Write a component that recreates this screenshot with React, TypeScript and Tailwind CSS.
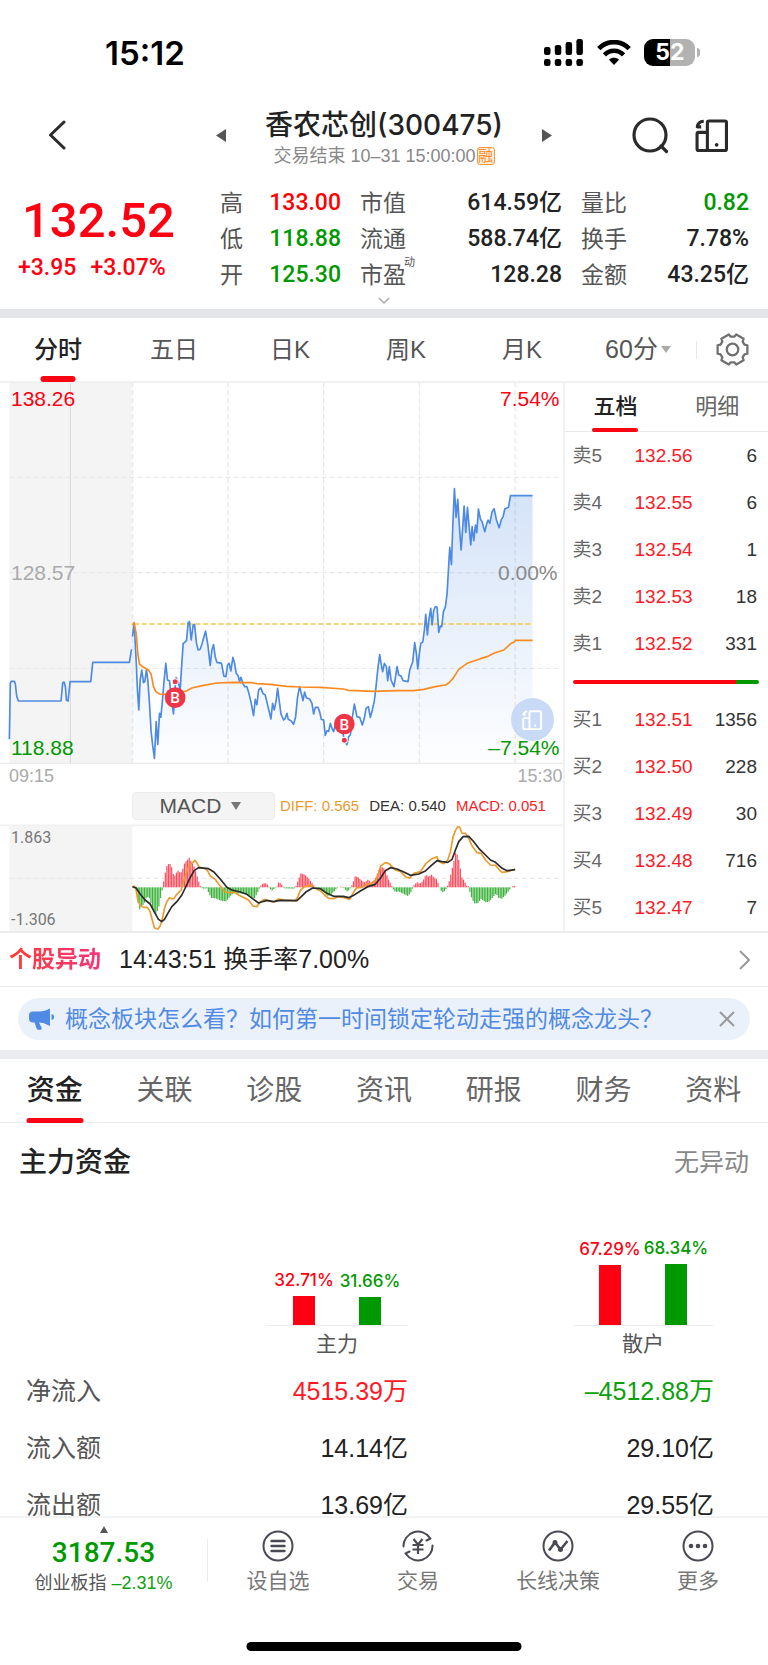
import { useState } from "react";

const klineTabs = ["分时", "五日", "日K", "周K", "月K"];
const infoTabs = ["资金", "关联", "诊股", "资讯", "研报", "财务", "资料"];

const stats = [
  { label: "高", value: "133.00", color: "text-[#fe0000]" },
  { label: "市值", value: "614.59亿", color: "text-[#222]" },
  { label: "量比", value: "0.82", color: "text-[#009900]" },
  { label: "低", value: "118.88", color: "text-[#009900]" },
  { label: "流通", value: "588.74亿", color: "text-[#222]" },
  { label: "换手", value: "7.78%", color: "text-[#222]" },
  { label: "开", value: "125.30", color: "text-[#009900]" },
  { label: "市盈", value: "128.28", color: "text-[#222]", sup: "动" },
  { label: "金额", value: "43.25亿", color: "text-[#222]" },
];

const sells = [
  ["卖5", "132.56", "6"],
  ["卖4", "132.55", "6"],
  ["卖3", "132.54", "1"],
  ["卖2", "132.53", "18"],
  ["卖1", "132.52", "331"],
];
const buys = [
  ["买1", "132.51", "1356"],
  ["买2", "132.50", "228"],
  ["买3", "132.49", "30"],
  ["买4", "132.48", "716"],
  ["买5", "132.47", "7"],
];

const flowRows = [
  { label: "净流入", main: "4515.39万", retail: "–4512.88万", colored: true },
  { label: "流入额", main: "14.14亿", retail: "29.10亿", colored: false },
  { label: "流出额", main: "13.69亿", retail: "29.55亿", colored: false },
];

// chart data, x / y in chart units (3 units per css pixel)
const preLine =
  "28,1288 31,1118 34,1114 43,1114 46,1122 50,1158 55,1173 183,1173 188,1118 192,1116 196,1130 199,1170 204,1173 210,1115 272,1115 278,1057 388,1057 394,1018";
const priceLine =
  "397,980 402,938 408,1050 412,1140 416,1200 420,1110 425,1080 430,1118 434,1115 439,1078 443,1110 448,1180 453,1265 458,1310 463,1345 468,1235 473,1303 478,1210 482,1222 487,1170 492,1110 497,1060 502,1110 508,1112 514,1170 520,1212 525,1130 528,1103 534,1115 540,1140 545,1060 549,1000 555,996 559,992 564,938 568,935 573,990 579,945 583,943 589,1000 594,1020 600,1018 606,1000 616,963 623,1005 630,1066 635,1020 640,1004 645,1040 650,1057 664,1060 671,1098 677,1100 682,1065 687,1060 692,1083 698,1042 703,1060 708,1090 714,1098 718,1115 722,1102 728,1120 733,1130 740,1130 746,1150 752,1175 760,1217 765,1168 770,1184 775,1140 782,1134 788,1150 795,1155 801,1180 812,1227 817,1180 822,1200 828,1170 832,1135 838,1180 842,1212 850,1230 855,1225 860,1210 864,1228 872,1232 880,1243 886,1220 892,1160 898,1130 903,1150 908,1172 913,1146 918,1163 928,1167 935,1180 940,1212 945,1192 953,1192 958,1205 963,1228 970,1230 975,1276 980,1262 985,1264 990,1240 995,1255 1000,1265 1005,1245 1010,1235 1018,1240 1025,1255 1030,1280 1035,1298 1040,1304 1045,1280 1050,1275 1055,1230 1062,1182 1070,1220 1078,1222 1086,1245 1092,1225 1097,1195 1104,1190 1110,1222 1116,1200 1122,1172 1127,1130 1132,1080 1138,1034 1142,1060 1147,1085 1152,1060 1158,1070 1162,1112 1167,1070 1172,1110 1181,1130 1190,1070 1195,1095 1202,1098 1208,1112 1223,1115 1228,1080 1237,1055 1243,998 1248,1030 1252,1077 1257,1030 1261,1000 1267,996 1272,960 1276,913 1281,975 1286,925 1291,895 1295,945 1300,900 1305,890 1310,892 1315,967 1320,948 1324,950 1329,905 1335,890 1340,850 1344,780 1348,712 1353,764 1357,650 1362,536 1367,622 1372,568 1377,650 1382,720 1387,650 1391,588 1396,667 1401,592 1406,650 1411,705 1415,650 1420,692 1425,645 1429,668 1434,597 1440,628 1445,635 1453,665 1459,640 1463,630 1468,640 1475,605 1481,596 1488,630 1496,653 1503,628 1508,620 1513,597 1524,592 1530,557 1596,557";
const avgLine =
  "397,945 402,938 408,970 413,1030 418,1062 430,1072 445,1080 453,1093 460,1130 467,1145 478,1152 495,1153 530,1152 560,1142 575,1134 610,1126 650,1119 700,1117 755,1118 770,1121 810,1123 860,1129 900,1131 960,1132 1030,1137 1045,1141 1120,1144 1190,1142 1240,1142 1270,1138 1305,1130 1335,1125 1345,1119 1358,1105 1375,1078 1400,1060 1440,1046 1460,1040 1480,1030 1510,1020 1532,1000 1540,997 1545,991 1596,991";

const diffLine =
  "397,260 403,258 408,270 413,300 420,315 430,322 442,322 450,335 457,362 463,384 473,387 480,378 487,355 493,325 500,305 508,293 520,297 530,283 543,270 550,245 558,220 566,198 575,190 584,181 591,190 597,202 615,206 622,212 630,228 645,238 660,258 675,276 690,278 702,276 715,285 732,293 745,300 758,318 770,320 780,306 792,298 805,303 820,306 835,297 850,300 885,302 893,290 900,272 912,260 930,256 945,265 960,272 973,285 985,295 1000,296 1015,290 1035,294 1048,298 1058,280 1068,264 1085,262 1100,252 1115,250 1128,238 1135,218 1141,198 1155,188 1166,191 1175,200 1185,210 1200,214 1215,230 1228,235 1240,220 1260,215 1277,190 1292,178 1309,170 1316,185 1330,191 1342,180 1350,155 1358,110 1365,92 1372,80 1378,82 1384,99 1395,100 1405,115 1415,138 1430,158 1442,160 1455,180 1470,195 1485,196 1495,208 1505,217 1525,214 1544,207";
const deaLine =
  "397,260 408,264 420,282 435,300 450,312 462,335 475,358 485,365 493,358 503,340 515,320 530,305 545,285 558,258 570,233 582,212 595,203 625,206 640,215 660,237 680,262 695,270 720,276 740,283 760,298 775,309 790,304 800,301 820,305 840,301 890,302 903,290 918,275 937,264 960,266 980,280 1000,289 1030,289 1045,293 1060,286 1080,273 1105,259 1125,253 1140,235 1155,212 1170,203 1190,207 1215,218 1230,226 1255,222 1275,213 1293,196 1310,182 1325,185 1342,187 1355,178 1365,150 1375,125 1388,110 1405,109 1418,123 1435,145 1455,165 1470,180 1485,187 1505,205 1520,212 1544,209";

const macdKnots: number[][] = [
  [397, 0], [404, 0], [407, -10], [412, -45], [415, -68], [418, -65], [425, -55], [430, -50],
  [438, -28], [445, -30], [455, -60], [463, -82], [468, -75], [474, -60], [480, -28], [486, 0],
  [490, 25], [497, 62], [505, 72], [511, 68], [515, 50], [520, 30], [525, 42], [532, 50],
  [540, 42], [546, 55], [552, 75], [558, 80], [566, 90], [572, 75], [580, 62], [587, 40],
  [593, 20], [600, 0], [606, -4], [618, -3], [625, -20], [632, -32], [645, -33], [660, -40],
  [675, -42], [682, -35], [692, -22], [700, -18], [720, -18], [740, -22], [750, -27], [760, -35],
  [768, -20], [775, -5], [780, 5], [787, 12], [797, 12], [803, 4], [808, -4], [813, -10],
  [820, -4], [828, 2], [832, 15], [840, 12], [846, 3], [852, -3], [880, -4], [886, 5],
  [892, 22], [900, 42], [912, 38], [920, 30], [930, 18], [937, 8], [942, 0], [950, -2],
  [960, -8], [970, -15], [980, -26], [990, -22], [1000, -12], [1008, -2], [1020, 2], [1026, 2],
  [1032, -6], [1040, -13], [1047, -5], [1055, 10], [1063, 34], [1072, 30], [1080, 22], [1085, 18],
  [1092, 15], [1102, 24], [1110, 15], [1118, 20], [1125, 30], [1132, 48], [1140, 63], [1148, 58],
  [1155, 45], [1162, 25], [1170, 10], [1175, -3], [1183, -14], [1192, -12], [1205, -18], [1220, -26],
  [1228, -18], [1235, -3], [1240, 8], [1250, 16], [1255, 10], [1265, 18], [1275, 38], [1283, 32],
  [1292, 38], [1300, 28], [1308, 24], [1314, 4], [1320, -10], [1326, -15], [1332, -10], [1338, 0],
  [1345, 20], [1352, 50], [1358, 75], [1364, 105], [1369, 98], [1375, 75], [1382, 30], [1390, 20],
  [1396, 5], [1402, 3], [1407, -15], [1412, -32], [1420, -48], [1430, -48], [1440, -35], [1455, -45],
  [1465, -42], [1475, -30], [1485, -18], [1493, -32], [1502, -34], [1512, -25], [1525, -8], [1530, 0],
  [1535, 4], [1544, 4],
];

const macdAt = (x: number) => {
  const i = macdKnots.findIndex((k) => k[0] >= x);
  if (i <= 0) return 0;
  const [x0, y0] = macdKnots[i - 1];
  const [x1, y1] = macdKnots[i];
  return y0 + ((y1 - y0) * (x - x0)) / (x1 - x0);
};
const macdBars = Array.from({ length: 240 }, (_, i) => {
  const x = 398 + i * 4.78;
  return { x, h: macdAt(x) };
}).filter((b) => Math.abs(b.h) > 1);

const gearPoints = [0, 60, 120, 180, 240, 300]
  .flatMap((a) => [
    [a - 16, 15],
    [a + 16, 15],
    [a + 22, 12.5],
    [a + 38, 12.5],
  ])
  .map(([a, r]) => {
    const t = (a * Math.PI) / 180;
    return `${(16 + r * Math.cos(t)).toFixed(2)},${(16 + r * Math.sin(t)).toFixed(2)}`;
  })
  .join(" ");

const BookIcon = ({ className }: { className: string }) => (
  <svg viewBox="0 0 32 32" className={className} fill="none" stroke="currentColor" strokeWidth="3" strokeLinejoin="round">
    <rect x="12" y="2" width="18.5" height="28.5" rx="1.5" />
    <path d="M12 13H3.5a1.5 1.5 0 0 0-1.5 1.5V29a1.5 1.5 0 0 0 1.5 1.5H12" />
    <circle cx="21" cy="25" r="1.8" fill="currentColor" stroke="none" />
    <path d="M8.5 2.2C4.8 2.4 2.6 4.3 2.2 7.6H6" />
  </svg>
);

const StatusBar = () => (
  <div className="flex h-[103px] items-center justify-between pt-[2px] pr-[68px] pl-[105px]">
    <span className="font-[Inter] text-[33px] leading-[40px] font-semibold text-black">15:12</span>
    <div className="flex items-center">
      <svg viewBox="0 0 39 27" className="h-[27px] w-[39px]">
        {[8, 6, 3, 0].map((top, i) => (
          <g key={i}>
            <rect x={i * 10.8} y={top} width="6.5" height={16 - top} rx="2.2" />
            <rect x={i * 10.8} y="20" width="6.5" height="7" rx="2.2" />
          </g>
        ))}
      </svg>
      <svg viewBox="0 0 34 25" className="ml-[14px] h-[25px] w-[34px]" fill="none" stroke="black" strokeWidth="4.6">
        <path d="M1.8 8.6C10-.1 24-.1 32.2 8.6" />
        <path d="M7.4 14.8c5.5-5.4 13.7-5.4 19.2 0" />
        <path d="M17 25l-5-5.2c2.8-2.6 7.2-2.6 10 0z" fill="black" stroke="none" />
      </svg>
      <div className="ml-[13px] flex h-[27px] w-[51px] overflow-hidden rounded-[9px] font-[Inter] text-[23px] leading-[27px] font-bold text-white">
        <span className="w-[26px] bg-black text-right">5</span>
        <span className="flex-1 bg-[#b2b2b2]">2</span>
      </div>
      <span className="ml-[2px] h-[9px] w-[3px] rounded-r-full bg-[#b2b2b2]" />
    </div>
  </div>
);

const Header = () => (
  <header className="flex h-[64px] items-center justify-between pr-[40px] pl-[47px]">
    <button aria-label="返回" className="w-[125px]">
      <svg viewBox="0 0 20 30" className="h-[30px] w-[20px]" fill="none" stroke="#2a2a2a" strokeWidth="3" strokeLinecap="round" strokeLinejoin="round">
        <path d="M17 2L3.5 15 17 28" />
      </svg>
    </button>
    <div className="flex w-[336px] items-center justify-between">
      <button aria-label="上一只">
        <svg viewBox="0 0 10 13" className="h-[13px] w-[10px]">
          <path d="M10 0v13L0 6.5z" fill="#555" />
        </svg>
      </button>
      <div className="flex flex-col items-center pt-[6px]">
        <h1 className="font-[Inter,Noto_Sans_CJK_SC,sans-serif] text-[28px] leading-[36px] font-medium whitespace-nowrap text-[#222]">
          香农芯创(300475)
        </h1>
        <p className="flex items-center text-[18px] leading-[26px] whitespace-nowrap text-[#888]">
          交易结束 10–31 15:00:00
          <span className="ml-px flex h-[18px] w-[18px] items-center justify-center rounded-[3px] border border-[#ff9436] bg-[#fff0e0] text-[15px] leading-[16px] text-[#ff8a1f]">
            融
          </span>
        </p>
      </div>
      <button aria-label="下一只">
        <svg viewBox="0 0 10 13" className="h-[13px] w-[10px]">
          <path d="M0 0v13l10-6.5z" fill="#555" />
        </svg>
      </button>
    </div>
    <div className="flex w-[132px] items-center justify-end gap-[26px]">
      <button aria-label="搜索">
        <svg viewBox="0 0 37 37" className="h-[37px] w-[37px]" fill="none" stroke="#2a2a2a" strokeWidth="3.2" strokeLinecap="round">
          <circle cx="18" cy="18" r="16" />
          <path d="M29 29l5.5 5.5" />
        </svg>
      </button>
      <button aria-label="研究">
        <BookIcon className="h-[33px] w-[33px] text-[#2a2a2a]" />
      </button>
    </div>
  </header>
);

const Quote = () => (
  <section className="h-[151px] border-b-[9px] border-[#e4e5e9]">
    <div className="flex pt-[18px] pr-[19px]">
      <div className="w-[220px] pt-[10px] pl-[18px] font-[Roboto] text-[#fe0011]">
        <div className="pl-[4px] text-[49px] leading-[52px] font-medium">132.52</div>
        <div className="flex gap-[14px] pt-[7px] text-[23px] leading-[28px] font-medium">
          <span>+3.95</span>
          <span>+3.07%</span>
        </div>
      </div>
      <dl className="grid flex-1 grid-cols-[121fr_202fr_168fr] gap-x-[19px] text-[23px] leading-[36px]">
        {stats.map((s) => (
          <div key={s.label} className="flex justify-between">
            <dt className="relative text-[#555]">
              {s.label}
              {s.sup && <span className="absolute -top-[13px] left-full -ml-[2px] text-[11px]">{s.sup}</span>}
            </dt>
            <dd className={`font-[Roboto,Noto_Sans_CJK_SC,sans-serif] font-medium ${s.color}`}>{s.value}</dd>
          </div>
        ))}
      </dl>
    </div>
    <svg viewBox="0 0 12 7" className="mx-auto mt-[4px] h-[7px] w-[12px]" fill="none" stroke="#aaa" strokeWidth="1.5">
      <path d="M1 1l5 5 5-5" />
    </svg>
  </section>
);

const KlineTabs = () => {
  const [active, setActive] = useState("分时");
  return (
    <nav className="flex h-[65px] items-stretch border-b-2 border-[#f1f1f1] text-[24px]">
      {klineTabs.map((t) => (
        <button
          key={t}
          onClick={() => setActive(t)}
          className={`relative flex-116 ${active === t ? "font-medium text-[#222]" : "text-[#555]"}`}
        >
          {t}
          {active === t && (
            <span className="absolute -bottom-px left-1/2 h-[6px] w-[35px] -translate-x-1/2 rounded-full bg-[#fa0514]" />
          )}
        </button>
      ))}
      <button className="flex flex-116 items-center justify-center gap-[3px] text-[25px] text-[#555]">
        60分
        <svg viewBox="0 0 10 7" className="h-[7px] w-[10px]">
          <path d="M0 0h10L5 7z" fill="#aaa" />
        </svg>
      </button>
      <button aria-label="设置" className="flex flex-72 items-center">
        <span className="h-[18px] w-px bg-[#e8e8e8]" />
        <svg viewBox="0 0 32 32" className="ml-[19px] h-[33px] w-[33px]" fill="none" stroke="#707070" strokeWidth="2.2" strokeLinejoin="round">
          <polygon points={gearPoints} />
          <circle cx="16" cy="16" r="5.6" />
        </svg>
      </button>
    </nav>
  );
};

const Marker = ({ x, y, dot }: { x: number; y: number; dot: number }) => (
  <g>
    <circle cx={x} cy={dot} r="9" fill="#f03548" stroke="#fff" strokeWidth="3" />
    <circle cx={x} cy={y} r="31" fill="#f03548" />
    <text x={x} y={y + 17} textAnchor="middle" fontSize="46" fontFamily="Roboto" fontWeight="500" fill="#fff">
      B
    </text>
  </g>
);

const PriceChart = () => (
  <div className="relative text-[21px] leading-[24px]">
    <svg viewBox="0 219 1686 1143" preserveAspectRatio="none" className="h-[381px] w-full" fill="none">
      <defs>
        <linearGradient id="priceFill" gradientUnits="userSpaceOnUse" x1="0" y1="540" x2="0" y2="1360">
          <stop offset="0" stopColor="#4d8ae3" stopOpacity="0.24" />
          <stop offset="1" stopColor="#4d8ae3" stopOpacity="0.01" />
        </linearGradient>
      </defs>
      <rect x="28" y="216" width="369" height="1146" fill="#f4f4f4" />
      <path d="M211 216V1360" stroke="#d9d9dc" strokeWidth="3" />
      <g stroke="#e9e9e9" strokeWidth="4" strokeDasharray="15 9">
        <path d="M28 502H1680M28 788H1680M28 1075H1680" />
        <path d="M397 216V1360M683 216V1360M970 216V1360M1257 216V1360M1544 216V1360" />
      </g>
      <polygon points={`397,1360 ${priceLine} 1596,1360`} fill="url(#priceFill)" />
      <path d="M0 1360H1686" stroke="#ececec" strokeWidth="4" />
      <path d="M402 942H1596" stroke="#f3c54b" strokeWidth="4" strokeDasharray="15 8" />
      <g strokeWidth="5" strokeLinejoin="round">
        <polyline points={preLine} stroke="#4d8ae3" />
        <polyline points={priceLine} stroke="#4d8ae3" />
        <polyline points={avgLine} stroke="#fa8a1e" />
      </g>
      <Marker x={525} y={1163} dot={1115} />
      <Marker x={1032} y={1242} dot={1291} />
    </svg>
    <span className="absolute top-[4px] left-[11px] text-[#fe0011]">138.26</span>
    <span className="absolute top-[178px] left-[11px] text-[#aaa]">128.57</span>
    <span className="absolute bottom-[4px] left-[11px] text-[#009900]">118.88</span>
    <span className="absolute top-[4px] right-[3px] text-[#fe0011]">7.54%</span>
    <span className="absolute top-[178px] right-[5px] text-[#8a8a8a]">0.00%</span>
    <button aria-label="研究" className="absolute right-[9px] bottom-[23px] flex h-[43px] w-[43px] items-center justify-center rounded-full bg-[#c3d6f5]/90">
      <BookIcon className="h-[20px] w-[20px] text-white" />
    </button>
    <span className="absolute right-[3px] bottom-[4px] text-[#009900]">–7.54%</span>
  </div>
);

const MacdChart = () => (
  <div className="relative">
    <svg viewBox="0 72 1686 321" preserveAspectRatio="none" className="h-[107px] w-full" fill="none">
      <rect x="28" y="75" width="369" height="320" fill="#f4f4f4" />
      <path d="M0 76H1686" stroke="#f1f1f1" strokeWidth="5" />
      <path d="M28 235H1680" stroke="#e9e9e9" strokeWidth="4" strokeDasharray="15 9" />
      {macdBars.map((b) => (
        <rect key={b.x} x={b.x} y={b.h > 0 ? 262 - b.h : 262} width="3.6" height={Math.abs(b.h)} fill={b.h > 0 ? "#fd4a5c" : "#3db23d"} />
      ))}
      <g strokeWidth="5" strokeLinejoin="round">
        <polyline points={diffLine} stroke="#eb9b2d" />
        <polyline points={deaLine} stroke="#2b2b2b" />
      </g>
    </svg>
    <span className="absolute top-[4px] left-[11px] font-[Roboto] text-[16px] leading-[20px] text-[#777]">1.863</span>
    <span className="absolute bottom-px left-[11px] font-[Roboto] text-[16px] leading-[20px] text-[#777]">-1.306</span>
  </div>
);

const OrderRows = ({ rows }: { rows: string[][] }) => (
  <table className="w-full table-fixed text-[19px] leading-[24px]">
    <tbody>
      {rows.map(([name, price, lots]) => (
        <tr key={name} className="h-[47px]">
          <th className="w-[70px] pl-[8px] text-left font-normal text-[#666]">{name}</th>
          <td className="w-[68px] text-[#fe1a26]">{price}</td>
          <td className="pr-[11px] text-right text-[#333]">{lots}</td>
        </tr>
      ))}
    </tbody>
  </table>
);

const OrderBook = () => {
  const [tab, setTab] = useState("五档");
  return (
    <aside className="flex-204 border-l-2 border-[#f1f1f1]">
      <div className="flex h-[49px] border-b border-[#e8e8e8] text-[22px]">
        {["五档", "明细"].map((t) => (
          <button
            key={t}
            onClick={() => setTab(t)}
            className={`relative flex-1 pb-[2px] ${tab === t ? "font-medium text-[#222]" : "text-[#666]"}`}
          >
            {t}
            {tab === t && (
              <span className="absolute -bottom-px left-1/2 h-[4px] w-[46px] -translate-x-1/2 rounded-full bg-[#fa0514]" />
            )}
          </button>
        ))}
      </div>
      <OrderRows rows={sells} />
      <div className="flex h-[29px] items-center pr-[9px] pl-[8px]">
        <span className="h-[4px] flex-163 rounded-l-full bg-[#fa0514]" />
        <span className="h-[4px] flex-23 rounded-r-full bg-[#009900]" />
      </div>
      <OrderRows rows={buys} />
    </aside>
  );
};

const FlowBars = ({ name, bars }: { name: string; bars: { pct: string; h: number; green?: boolean }[] }) => (
  <div className="flex w-[140px] flex-col items-center">
    <div className="flex w-full items-end justify-center border-b border-[#ececec]">
      {bars.map((b) => (
        <div key={b.pct} className="flex w-[66px] flex-col items-center">
          <span className={`text-[17px] leading-[20px] font-medium font-[Inter] ${b.green ? "text-[#009900]" : "text-[#fe0011]"}`}>
            {b.pct}
          </span>
          <span
            className={`mt-[6px] w-[22px] ${b.green ? "bg-[#009900]" : "bg-[#fe0011]"}`}
            style={{ height: b.h }}
          />
        </div>
      ))}
    </div>
    <span className="pt-[4px] text-[21px] leading-[28px] text-[#555]">{name}</span>
  </div>
);

const Funds = () => {
  const [active, setActive] = useState("资金");
  return (
    <section>
      <nav className="grid h-[64px] grid-cols-7 border-b border-[#ececec] text-[28px]">
        {infoTabs.map((t) => (
          <button
            key={t}
            onClick={() => setActive(t)}
            className={`relative ${active === t ? "font-medium text-[#222]" : "text-[#666]"}`}
          >
            {t}
            {active === t && (
              <span className="absolute -bottom-px left-1/2 h-[5px] w-[57px] -translate-x-1/2 rounded-full bg-[#fa0514]" />
            )}
          </button>
        ))}
      </nav>
      <div className="flex h-[80px] items-center justify-between px-[19px]">
        <h2 className="text-[28px] font-medium text-[#222]">主力资金</h2>
        <a href="#abnormal" className="text-[25px] text-[#888]">无异动</a>
      </div>
      <div className="flex h-[159px] items-end justify-end gap-[166px] pr-[55px] pb-[4px]">
        <FlowBars name="主力" bars={[{ pct: "32.71%", h: 29 }, { pct: "31.66%", h: 28, green: true }]} />
        <FlowBars name="散户" bars={[{ pct: "67.29%", h: 60 }, { pct: "68.34%", h: 61, green: true }]} />
      </div>
      <table className="w-full text-[25px] leading-[32px]">
        <tbody>
          {flowRows.map((r) => (
            <tr key={r.label} className="h-[57px]">
              <th className="pl-[26px] text-left font-normal text-[#555]">{r.label}</th>
              <td className={`w-[300px] text-right ${r.colored ? "text-[#fe1a26]" : "text-[#222]"}`}>{r.main}</td>
              <td className={`w-[360px] pr-[54px] text-right ${r.colored ? "text-[#0da00d]" : "text-[#222]"}`}>{r.retail}</td>
            </tr>
          ))}
        </tbody>
      </table>
    </section>
  );
};

const navItems = [
  {
    label: "设自选",
    icon: (
      <>
        <circle cx="16" cy="16" r="14.5" />
        <path d="M9.5 11h13M9.5 16h13M9.5 21h13" strokeWidth="2.4" strokeLinecap="round" />
      </>
    ),
  },
  {
    label: "交易",
    icon: (
      <>
        <path d="M1.5 16.5A14.5 14.5 0 0 1 28 8M24.5 10.5L28.5 8.5M30.5 15.5A14.5 14.5 0 0 1 4 24M7.5 21.5L3.5 23.5" strokeLinecap="round" />
        <path d="M11.5 9l4.5 5.5L20.5 9M16 14.5V24M10.5 15h11M10.5 19.5h11" strokeWidth="2.2" />
      </>
    ),
  },
  {
    label: "长线决策",
    icon: (
      <>
        <circle cx="16" cy="16" r="14.5" />
        <path d="M7 20.5l6-8 5.5 7L25.5 11" strokeWidth="2.6" />
        <circle cx="13" cy="12.5" r="1.5" fill="#4a4a55" />
        <circle cx="18.5" cy="19.5" r="1.5" fill="#4a4a55" />
      </>
    ),
  },
  {
    label: "更多",
    icon: (
      <>
        <circle cx="16" cy="16" r="14.5" />
        <g fill="#4a4a55" stroke="none">
          <circle cx="9" cy="16" r="2.3" />
          <circle cx="16" cy="16" r="2.3" />
          <circle cx="23" cy="16" r="2.3" />
        </g>
      </>
    ),
  },
];

const BottomBar = () => (
  <footer className="fixed inset-x-0 bottom-0 h-[149px] border-t-2 border-[#f3f3f3] bg-white">
    <div className="flex">
      <button className="flex flex-207 flex-col items-center pt-[8px]">
        <svg viewBox="0 0 8 7" className="h-[7px] w-[8px]">
          <path d="M0 7h8L4 0z" fill="#555" />
        </svg>
        <span className="mt-[4px] font-[Roboto] text-[28px] leading-[32px] font-medium text-[#009900]">3187.53</span>
        <span className="pt-px text-[18px] leading-[26px] whitespace-nowrap text-[#555]">
          创业板指 <span className="text-[#0da00d]">–2.31%</span>
        </span>
      </button>
      <span className="mt-[21px] h-[43px] w-px bg-[#ececec]" />
      <nav className="flex flex-560">
        {navItems.map((n) => (
          <button key={n.label} className="flex flex-1 flex-col items-center pt-[12px] text-[21px] leading-[32px] text-[#777]">
            <svg viewBox="0 0 32 32" className="mb-[3px] h-[32px] w-[32px]" fill="none" stroke="#4a4a55" strokeWidth="2">
              {n.icon}
            </svg>
            {n.label}
          </button>
        ))}
      </nav>
    </div>
    <div className="absolute bottom-[14px] left-1/2 h-[9px] w-[275px] -translate-x-1/2 rounded-full bg-black" />
  </footer>
);

export default function App() {
  const [showTip, setShowTip] = useState(true);
  return (
    <div className="bg-white pb-[133px] font-[Liberation_Sans,Noto_Sans_CJK_SC,sans-serif]">
      <StatusBar />
      <Header />
      <Quote />
      <KlineTabs />
      <div className="flex border-b-2 border-[#ececec]">
        <div className="flex-564">
          <PriceChart />
          <div className="flex h-[24px] items-center justify-between pl-[9px] text-[18px] text-[#aaa]">
            <span>09:15</span>
            <span>15:30</span>
          </div>
          <div className="flex h-[36px] items-center gap-[10px] pl-[132px] text-[15px] leading-[20px] whitespace-nowrap">
            <button className="-mr-[5px] flex h-[28px] w-[143px] items-center justify-center gap-[10px] rounded-[4px] border border-[#ececec] bg-[#f4f4f4] pr-[6px] text-[21px] text-[#555]">
              MACD
              <svg viewBox="0 0 10 8" className="h-[8px] w-[10px]">
                <path d="M0 0h10L5 8z" fill="#777" />
              </svg>
            </button>
            <span className="text-[#eb9b2d]">DIFF: 0.565</span>
            <span className="text-[#333]">DEA: 0.540</span>
            <span className="text-[#fe1a26]">MACD: 0.051</span>
          </div>
          <MacdChart />
        </div>
        <OrderBook />
      </div>
      <a href="#alert" className="flex h-[54px] items-center border-b border-[#ececec] pr-[18px] pl-[9px] text-[25px] text-[#222]">
        <span className="bg-linear-to-r from-[#ff3a2c] to-[#f5347a] bg-clip-text text-[23px] font-bold text-transparent">个股异动</span>
        <span className="ml-[18px] flex-1">14:43:51 换手率7.00%</span>
        <svg viewBox="0 0 11 20" className="h-[20px] w-[11px]" fill="none" stroke="#999" strokeWidth="2">
          <path d="M1 1l9 9-9 9" />
        </svg>
      </a>
      <div className="border-b-[9px] border-[#ebecf0] px-[18px] pt-[11px] pb-[10px]">
        {showTip && (
          <div className="flex h-[42px] items-center rounded-full bg-[#ebf1fb] pr-[15px] pl-[11px] text-[23px] whitespace-nowrap text-[#4f8ae4]">
            <svg viewBox="0 0 26 22" className="mr-[10px] h-[22px] w-[26px]" fill="currentColor">
              <path d="M21 .5v17.5C16.500 15.500 13 14.500 10 14.500L12.500 19.500c.6 1.500-.3 2.300-1.500 2.300H9.500c-1 0-1.600-.5-2-1.500L5.500 14.500H4A4 4 0 0 1 0 10.500V7.500A4 4 0 0 1 4 3.500h6C14 3.500 17.500 2.500 21 .5z" />
              <path d="M22.500 6c3.600.5 3.600 5.500 0 6z" />
            </svg>
            <span className="flex-1">概念板块怎么看？如何第一时间锁定轮动走强的概念龙头？</span>
            <button aria-label="关闭" onClick={() => setShowTip(false)}>
              <svg viewBox="0 0 16 16" className="h-[16px] w-[16px]" fill="none" stroke="#999" strokeWidth="2">
                <path d="M1 1l14 14M15 1L1 15" />
              </svg>
            </button>
          </div>
        )}
      </div>
      <Funds />
      <BottomBar />
    </div>
  );
}
